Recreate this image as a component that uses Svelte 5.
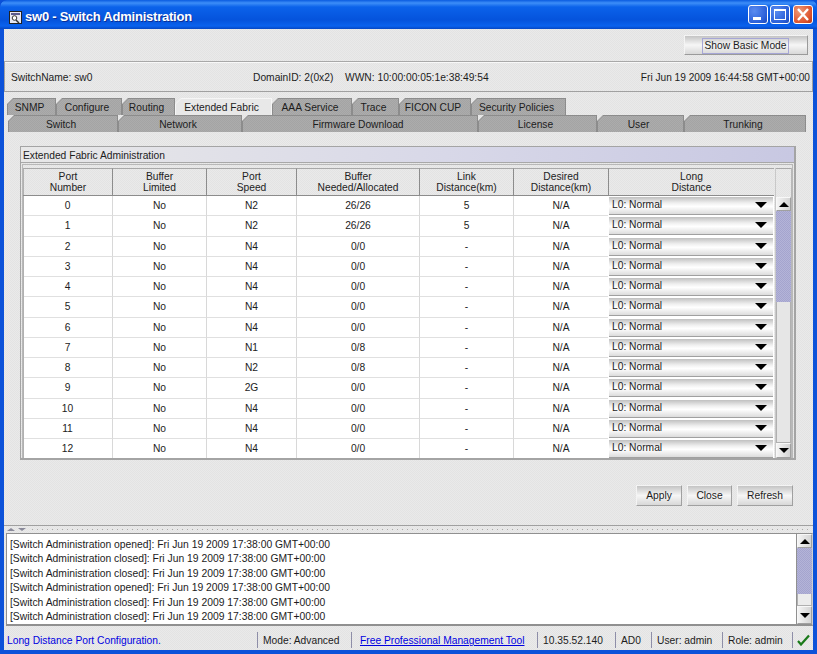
<script>
  const rowTabs = [
    { label: 'SNMP', w: 49 }, { label: 'Configure', w: 66 }, { label: 'Routing', w: 53 },
    { label: 'Extended Fabric', w: 97, active: true }, { label: 'AAA Service', w: 80 },
    { label: 'Trace', w: 47 }, { label: 'FICON CUP', w: 72 }, { label: 'Security Policies', w: 95 }
  ];
  const subTabs = [
    { label: 'Switch', w: 110 }, { label: 'Network', w: 124 }, { label: 'Firmware Download', w: 236 },
    { label: 'License', w: 119 }, { label: 'User', w: 87 }, { label: 'Trunking', w: 122 }
  ];
  const headers = [
    ['Port', 'Number'], ['Buffer', 'Limited'], ['Port', 'Speed'], ['Buffer', 'Needed/Allocated'],
    ['Link', 'Distance(km)'], ['Desired', 'Distance(km)'], ['Long', 'Distance']
  ];
  const ports = [
    [0, 'N2', '26/26', '5'], [1, 'N2', '26/26', '5'], [2, 'N4', '0/0', '-'], [3, 'N4', '0/0', '-'],
    [4, 'N4', '0/0', '-'], [5, 'N4', '0/0', '-'], [6, 'N4', '0/0', '-'], [7, 'N1', '0/8', '-'],
    [8, 'N2', '0/8', '-'], [9, '2G', '0/0', '-'], [10, 'N4', '0/0', '-'], [11, 'N4', '0/0', '-'],
    [12, 'N4', '0/0', '-']
  ];
  const log = ['opened', 'closed', 'closed', 'opened', 'closed', 'closed'];
</script>

<div class="win">
  <header class="title">
    <svg class="appicon" width="15" height="15" viewBox="0 0 15 15">
      <rect x="1.5" y="1.5" width="12" height="12" fill="#e8e8f4" stroke="#222"/>
      <rect x="3" y="3" width="9" height="2" fill="#5a5a90"/>
      <circle cx="6.5" cy="8" r="2.3" fill="#fff" stroke="#333"/>
      <path d="M8 10l3 3" stroke="#333" stroke-width="1.5"/>
    </svg>
    <span class="title-text">sw0 - Switch Administration</span>
    <div class="ctrls">
      <div class="ctrl"><svg width="20" height="19" viewBox="0 0 20 19"><rect x="5" y="12" width="8" height="3" fill="#fff"/></svg></div>
      <div class="ctrl"><svg width="20" height="19" viewBox="0 0 20 19"><rect x="4.5" y="4.5" width="11" height="10" fill="none" stroke="#fff"/><rect x="4" y="4" width="12" height="2" fill="#fff"/></svg></div>
      <div class="ctrl close"><svg width="20" height="19" viewBox="0 0 20 19"><path d="M5 4l10 11M15 4L5 15" stroke="#fff" stroke-width="2.4"/></svg></div>
    </div>
  </header>

  <div class="content">
    <div class="toolbar">
      <button class="btn basic"><span class="focus">Show Basic Mode</span></button>
    </div>

    <div class="info">
      <span class="i-name">SwitchName: sw0</span>
      <span class="i-dom">DomainID: 2(0x2)</span>
      <span class="i-wwn">WWN: 10:00:00:05:1e:38:49:54</span>
      <span class="i-date">Fri Jun 19 2009 16:44:58 GMT+00:00</span>
    </div>

    <div class="tabs">
      <div class="tabrow">
        {#each rowTabs as t}
          <div class="tab" class:active={t.active} style="width:{t.w}px"><span>{t.label}</span></div>
        {/each}
      </div>
      <div class="tabrow sub">
        {#each subTabs as t}
          <div class="tab" style="width:{t.w}px"><span>{t.label}</span></div>
        {/each}
      </div>
    </div>

    <main class="main">
      <section class="panel">
        <div class="panel-title">Extended Fabric Administration</div>
        <div class="tablewrap">
          <div class="tablecol">
            <div class="row head">
              {#each headers as h}
                <div class="th">{h[0]}<br />{h[1]}</div>
              {/each}
            </div>
            <div class="tbody">
              {#each ports as p}
                <div class="row body">
                  <div class="td">{p[0]}</div>
                  <div class="td">No</div>
                  <div class="td">{p[1]}</div>
                  <div class="td">{p[2]}</div>
                  <div class="td">{p[3]}</div>
                  <div class="td">N/A</div>
                  <div class="combo">
                    <span>L0: Normal</span>
                    <i class="tri down big"></i>
                  </div>
                </div>
              {/each}
            </div>
          </div>
          <div class="vscroll table-scroll">
            <div class="filler"></div>
            <div class="sbtn"><i class="tri up"></i></div>
            <div class="thumb t1"></div>
            <div class="track"></div>
            <div class="sbtn"><i class="tri down"></i></div>
          </div>
        </div>
      </section>

      <div class="actions">
        <button class="btn apply">Apply</button>
        <button class="btn closeb">Close</button>
        <button class="btn refresh">Refresh</button>
      </div>
    </main>

    <div class="divider">
      <i class="tri up tiny"></i><i class="tri down tiny"></i>
      <div class="dots"></div>
    </div>

    <div class="logbox">
      <div class="lines">
        {#each log as l}
          <div>[Switch Administration {l}]: Fri Jun 19 2009 17:38:00 GMT+00:00</div>
        {/each}
      </div>
      <div class="vscroll log-scroll">
        <div class="sbtn"><i class="tri up"></i></div>
        <div class="thumb t2"></div>
        <div class="track"></div>
        <div class="sbtn lower"><i class="tri down"></i></div>
      </div>
    </div>

    <footer class="status">
      <span class="s msg">Long Distance Port Configuration.</span>
      <span class="s mode">Mode: Advanced</span>
      <a class="s link" href="#top">Free Professional Management Tool</a>
      <span class="s ip">10.35.52.140</span>
      <span class="s ad">AD0</span>
      <span class="s user">User: admin</span>
      <span class="s role">Role: admin</span>
      <span class="s ok">
        <svg width="13" height="12" viewBox="0 0 13 12"><path d="M1 7l3 3.5L12 1.5" fill="none" stroke="#1a7a1a" stroke-width="2.2"/></svg>
      </span>
    </footer>
  </div>
</div>

<style>
  :global(body) { margin: 0; background: #0a50d8; }
  .win {
    width: 817px; height: 654px; box-sizing: border-box; overflow: hidden;
    display: flex; flex-direction: column;
    background: #0c52d9;
    border-radius: 7px 7px 0 0;
    padding: 0 4px 4px;
    font: 10.25px/12px "Liberation Sans", Arial, sans-serif;
    color: #1c1c1c;
  }
  .title {
    height: 29px; margin: 0 -4px; padding: 5px 5px 0 8px; flex: none;
    display: flex; align-items: center; box-sizing: border-box;
    background: linear-gradient(180deg, #0a5be0 0, #3d8ef8 3px, #0b62ea 7px, #0553dc 20px, #0a62ee 26px, #0547c4 29px);
    border-radius: 7px 7px 0 0;
  }
  .appicon { flex: none; }
  .title-text {
    margin-left: 2px; color: #fff; font: bold 13px/16px "Liberation Sans", sans-serif;
    letter-spacing: -0.22px; text-shadow: 1px 1px 0 #0a2f96;
  }
  .ctrls { margin-left: auto; display: flex; gap: 2px; margin-right: -1px; margin-top: -5px; }
  .ctrl {
    width: 20px; height: 19px; border: 1px solid #fff; border-radius: 3px; box-sizing: border-box;
    background: radial-gradient(circle at 30% 30%, #5b8cf0, #2a5fd8 70%, #1d48b8);
    display: flex; align-items: center; justify-content: center;
  }
  .ctrl svg { flex: none; }
  .ctrl.close { background: radial-gradient(circle at 30% 30%, #ee9a78, #de5530 65%, #b83410); margin-left: 1px; }

  .content {
    flex: 1; min-height: 0; display: flex; flex-direction: column; width: 809px;
    background: repeating-conic-gradient(#e3e3e3 0 25%, #eaeaea 0 50%) 0 0 / 2px 2px;
  }
  .toolbar { height: 32px; box-sizing: border-box; flex: none; display: flex; justify-content: flex-end; padding: 6px 5px 0 0; }
  .btn {
    display: flex; align-items: center; justify-content: center; box-sizing: border-box; padding: 1px 0 0;
    font: inherit; color: #1c1c1c;
    border: 1px solid; border-color: #f4f4f4 #9a9a9a #9a9a9a #f4f4f4;
    background: linear-gradient(180deg, #c4c4c4 0, #f6f6f6 50%, #d8d8d8 100%);
  }
  .basic { width: 124px; height: 20px; justify-content: flex-end; padding-right: 18px; }
  .focus { border: 1px solid #a6a6d6; padding: 1px 0; width: 87px; text-align: center; box-sizing: border-box; }
  .info {
    height: 31px; flex: none; box-sizing: border-box; display: flex; align-items: center;
    border: 1px solid #a0a0a0; border-top-color: #a8a8a8; padding: 2px 0 0 6px;
    box-shadow: inset 0 1px 0 #f8f8f8;
  }
  .i-name { width: 242px; }
  .i-dom { width: 92px; }
  .i-date { margin-left: auto; margin-right: 2px; font-size: 10.15px; }

  .tabs { margin-top: 6px; padding-left: 3px; flex: none; }
  .tabrow { display: flex; height: 17px; }
  .tabrow.sub { padding-left: 1px; }
  .tab {
    position: relative; height: 17px; flex: none; box-sizing: border-box;
    background: #8c8c8c;
    clip-path: polygon(6px 0, 100% 0, 100% 100%, 0 100%, 0 6px);
    display: flex; align-items: center; justify-content: center;
  }
  .tab::before {
    content: ""; position: absolute; inset: 1px 1px 0 1px;
    background: repeating-conic-gradient(#a4a4a4 0 25%, #acacac 0 50%) 0 0 / 2px 2px;
    clip-path: polygon(5px 0, 100% 0, 100% 100%, 0 100%, 0 5px);
  }
  .tab span { position: relative; top: 1px; left: -2px; }
  .tab.active { background: #f6f6f6; z-index: 1; }
  .tab.active::before { background: #e8e8e8; }

  .main { flex: 1; min-height: 0; box-sizing: border-box; padding: 14px 17px 0 16px; display: flex; flex-direction: column; }
  .panel {
    height: 314px; flex: none; box-sizing: border-box; border: 1px solid #a4a4a4; border-bottom-width: 2px; border-right-width: 2px;
    display: flex; flex-direction: column;
  }
  .panel-title {
    height: 16px; flex: none; box-sizing: border-box; padding: 2px 0 0 2px; line-height: 13px;
    background: linear-gradient(90deg, #e8e8e8 0, #d8d8e8 55%, #c8c8e2 100%);
    border-bottom: 1px solid #a8a8a8;
  }
  .tablewrap {
    flex: 1; min-height: 0; display: flex; margin: 1px 1px 0; padding: 3px 0 0 0; box-sizing: border-box;
    border: 1px solid #b8b8b8; border-bottom: 0;
  }
  .tablecol { width: 751px; flex: none; display: flex; flex-direction: column; min-height: 0; }
  .row { display: grid; grid-template-columns: 89px 94px 90px 123px 94px 95px 166px; flex: none; }
  .head { height: 27px; border-bottom: 1px solid #8c8c8c; box-sizing: content-box; }
  .th {
    text-align: center; color: #222; padding-top: 2px; line-height: 11px; box-sizing: border-box;
    border-left: 1px solid #8c8c8c; border-top: 1px solid #a8a8a8;
  }
  .th:first-child { border-left: 1px solid #b0b0b0; }
  .tbody { flex: 1; min-height: 0; overflow: hidden; background: #fff; border-left: 1px solid #b0b0b0; }
  .body { height: 20.25px; margin-left: -1px; }
  .td {
    background: #fff; text-align: center; line-height: 19px; box-sizing: border-box;
    border-left: 1px solid #d8d8d8; border-bottom: 1px solid #e0e0e0;
  }
  .td:first-child { border-left: 0; }
  .combo {
    display: flex; align-items: center; justify-content: space-between; box-sizing: border-box;
    padding: 0 6px 1px 3px; margin: 1px 1px 0 1px; height: 18px;
    background: linear-gradient(180deg, #c0c0c0 0, #efefef 35%, #fff 55%, #dcdcdc 100%);
    border-bottom: 1px solid #a0a0a0;
  }
  .tri { display: block; width: 0; height: 0; border-left: 5px solid transparent; border-right: 5px solid transparent; }
  .tri.down { border-top: 5px solid #000; }
  .tri.up { border-bottom: 5px solid #000; }
  .tri.big { border-left-width: 6px; border-right-width: 6px; border-top-width: 6px; }
  .tri.tiny { border-left-width: 4px; border-right-width: 4px; border-top-width: 0; border-bottom-width: 0; }
  .tri.tiny.up { border-bottom: 3px solid #8a8a9a; margin-right: 3px; }
  .tri.tiny.down { border-top: 3px solid #8a8a9a; margin-right: 4px; }

  .vscroll { display: flex; flex-direction: column; flex: none; box-sizing: border-box; }
  .table-scroll { width: 17px; margin-left: 1px; border-left: 1px solid #c8c8c8; border-right: 1px solid #b8b8b8; }
  .filler { height: 29px; flex: none; border-top: 1px solid #a8a8a8; box-sizing: border-box; }
  .sbtn {
    height: 14px; flex: none; display: flex; align-items: center; justify-content: center; box-sizing: border-box;
    background: linear-gradient(90deg, #f4f4f4, #d4d4d4); border: 1px solid; border-color: #f8f8f8 #a0a0a0 #a0a0a0 #f8f8f8;
  }
  .thumb { flex: none; background: repeating-conic-gradient(#a4a4ce 0 25%, #b4b4d8 0 50%) 0 0 / 2px 2px; }
  .t1 { height: 91px; }
  .t2 { height: 46px; }
  .track { flex: 1; border: 1px solid #b0b0b0; border-top: 0; background: #e6e6e6; }
  .table-scroll .sbtn:last-child { height: 15px; }

  .actions { display: flex; justify-content: flex-end; gap: 5px; margin-top: 25px; padding-right: 3px; }
  .actions .btn { height: 21px; border-color: #f4f4f4 #a0a0a0 #a0a0a0 #f4f4f4; }
  .apply { width: 46px; }
  .closeb { width: 45px; }
  .refresh { width: 56px; }

  .divider { height: 8px; flex: none; display: flex; align-items: center; padding: 0 2px 0 3px; box-sizing: border-box; border-top: 1px solid #a0a0a0; }
  .dots { flex: 1; height: 1px; margin: 0 0 0 2px; background: repeating-linear-gradient(90deg, #aaa 0 1px, transparent 1px 5px); }
  .logbox {
    height: 93px; flex: none; display: flex; box-sizing: border-box; background: #fff; margin: 0 0 0 2px;
    border: 1px solid #909090; border-right-color: #d0d0d0; border-bottom-width: 2px;
  }
  .lines { flex: 1; padding: 4px 0 0 3px; font-size: 10.35px; line-height: 14.4px; }
  .log-scroll { width: 16px; background: #e6e6e6; border-left: 1px solid #909090; }
  .log-scroll .sbtn.lower { height: 18px; }
  .log-scroll .track { background: #ececec; border-top: 0; }

  .status { height: 20px; flex: none; margin-top: 4px; display: flex; align-items: center; }
  .s { display: flex; align-items: center; height: 16px; box-sizing: border-box; padding: 2px 0 0 5px; border-left: 1px solid #8e8ea8; flex: none; }
  .msg { width: 253px; border-left: 0; padding-left: 3px; color: #0000e0; }
  .mode { width: 94px; }
  .link { width: 186px; color: #0000e0; text-decoration: underline; padding-left: 8px; }
  .ip { width: 78px; }
  .ad { width: 36px; }
  .user { width: 71px; }
  .role { width: 70px; }
  .ok { padding: 0 0 0 4px; }
</style>
